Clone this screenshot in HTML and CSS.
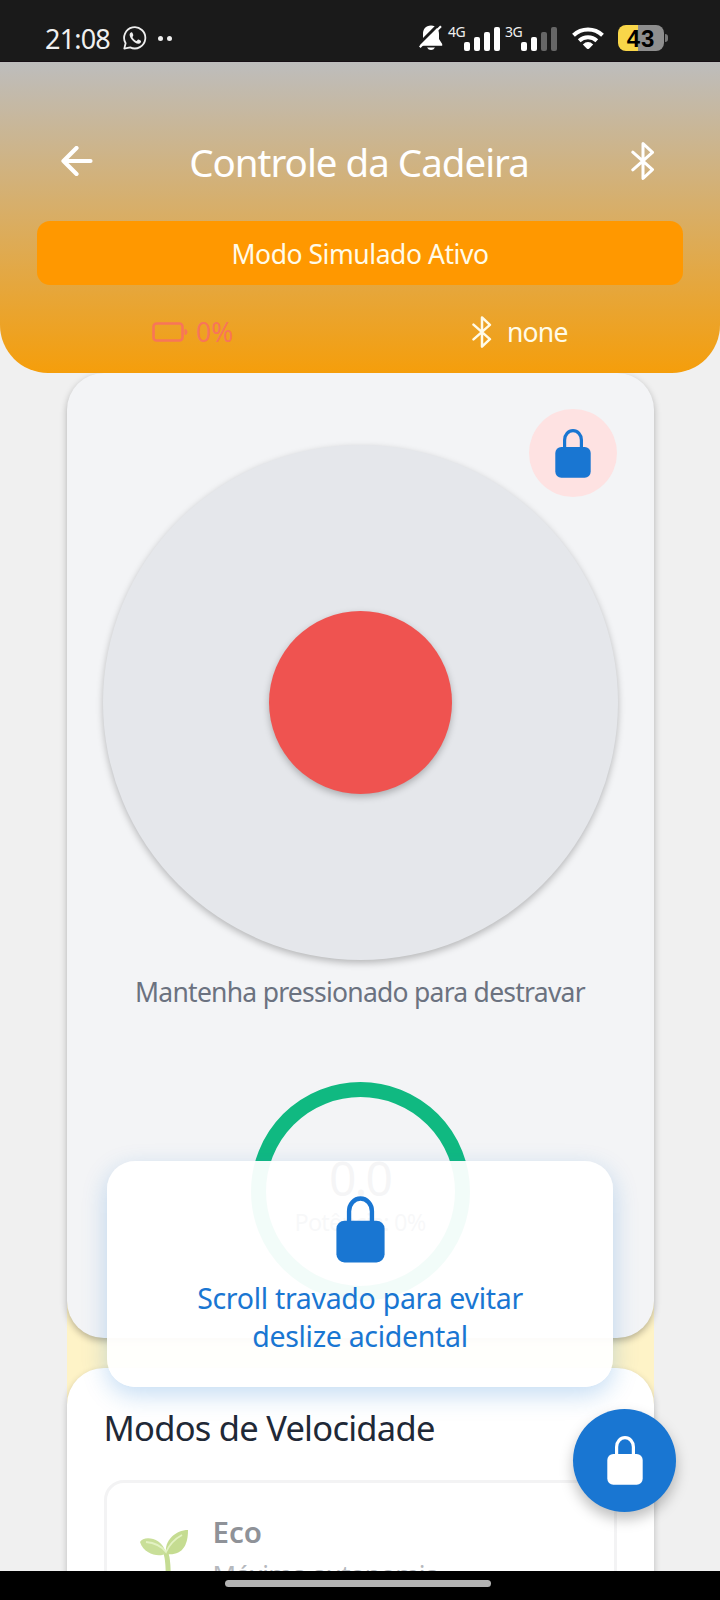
FILE: index.html
```html
<!DOCTYPE html>
<html lang="pt-BR">
<head>
<meta charset="utf-8">
<title>Controle da Cadeira</title>
<link rel="stylesheet" href="styles.css">
</head>
<body>
<svg class="defs" width="0" height="0" aria-hidden="true">
  <symbol id="lock" viewBox="0 0 36 49">
    <path d="M9.600 21V11a8.400 9.300 0 0 1 16.800 0v10" fill="none" stroke="currentColor" stroke-width="3.2"/>
    <rect x="0.3" y="18" width="35.4" height="30.7" rx="6" fill="currentColor"/>
  </symbol>
  <symbol id="bluetooth" viewBox="0 0 24 40">
    <path d="M1.8 11.2L21.5 28.6L12 37.5V2.5L21.5 11.4L1.8 28.8" fill="none" stroke="currentColor" stroke-width="3" stroke-linejoin="round" stroke-linecap="round"/>
  </symbol>
</svg>
<div class="phone">
  <div class="statusbar">
    <div class="status-left">
      <span class="clock">21:08</span>
      <svg class="whatsapp" viewBox="0 0 24 24"><path d="M1.3 22.6L2.600 17.200A10.6 10.6 0 1 1 7.200 21.400L1.300 22.600Z" fill="none" stroke="#eee" stroke-width="1.800" stroke-linejoin="round"/><path d="M8.300 6.300C6 7.300 6.200 10 8.500 13.200C11.200 16.900 15.800 19.200 17.600 16.700C18.600 15 17.900 14.600 15.600 13.600C14.400 13.100 14.300 15.300 13.200 14.900C11.700 14.300 9.900 12.300 9.500 11.200C9.300 10.300 10.700 10 10.200 8.700C9.600 7 9.400 6 8.300 6.300Z" fill="#eee"/></svg>
      <i class="dot"></i><i class="dot"></i>
    </div>
    <div class="status-right">
      <svg class="bell" viewBox="0 0 24 26"><path d="M12 0.500C6.500 0.500 4 4.500 4 9V14L0.800 19V20.800H23.200V19L20 14V9C20 4.500 17.500 0.500 12 0.500ZM8 22.500H16Q14.500 25 12 25T8 22.500Z" fill="#fff"/><path d="M-1.500 20.500L20 -1" stroke="#1a1a1a" stroke-width="3"/><path d="M0.800 22.300L22 1.200" stroke="#fff" stroke-width="2.200"/></svg>
      <div class="signal"><span class="net">4G</span><i class="b1"></i><i class="b2"></i><i class="b3"></i><i class="b4"></i></div>
      <div class="signal second"><span class="net">3G</span><i class="b1"></i><i class="b2"></i><i class="b3 off"></i><i class="b4 off"></i></div>
      <svg class="wifi" viewBox="0 0 32 24"><g fill="none" stroke="#fff" stroke-width="4"><path d="M1.500 9.200A21 21 0 0 1 30.500 9.200"/><path d="M7.200 14.700A13 13 0 0 1 24.800 14.700"/></g><path d="M10.800 18.500Q16 13.600 21.200 18.500L17 22.700Q16 23.500 15 22.700Z" fill="#fff"/></svg>
      <div class="batt">43</div><i class="batt-cap"></i>
    </div>
  </div>

  <header class="header">
    <div class="topbar">
      <svg class="back" viewBox="0 0 32 30"><path d="M15.500 2L2.500 15L15.500 28M2.500 15H29.500" fill="none" stroke="#fff" stroke-width="4.200" stroke-linecap="round" stroke-linejoin="round"/></svg>
      <h1 class="title"><span>Controle da Cadeira</span></h1>
      <svg class="bt-large"><use href="#bluetooth"/></svg>
    </div>
    <div class="banner">Modo Simulado Ativo</div>
    <div class="stats">
      <div class="stat low">
        <svg class="cell" viewBox="0 0 36 20"><rect x="1.500" y="1.500" width="29" height="17" rx="3" fill="none" stroke="currentColor" stroke-width="2.600"/><path d="M33 7.500Q35 7.500 35 10T33 12.500Z" fill="currentColor" stroke="currentColor"/></svg>
        <span>0%</span>
      </div>
      <div class="stat conn">
        <svg class="bt-small"><use href="#bluetooth"/></svg>
        <span>none</span>
      </div>
    </div>
  </header>

  <main class="content">
    <section class="control">
      <div class="lock-badge"><svg class="lock-sm"><use href="#lock"/></svg></div>
      <div class="joystick"><div class="knob"></div></div>
      <p class="hint">Mantenha pressionado para destravar</p>
      <div class="gauge">
        <span class="speed">0.0</span>
        <span class="power">Potência: 0%</span>
      </div>
    </section>
    <section class="modes">
      <h2 class="modes-title">Modos de Velocidade</h2>
      <div class="mode">
        <svg class="sprout" viewBox="0 0 48 60"><path d="M25.500 22Q29 30 28 58" fill="none" stroke="#c5dc93" stroke-width="5"/><path d="M0 12C3 6 21 6 26 23C21 28 4 25 0 12Z" fill="#c9df99"/><path d="M48 0C36 0 24 10 26 24C42 26 48 16 48 0Z" fill="#c5dc91"/><path d="M6 12Q19 13 26 22Q31 11 42 5" fill="none" stroke="#e3f2c3" stroke-width="1.800"/></svg>
        <div class="mode-text"><b class="mode-name">Eco</b><span class="mode-desc">Máxima autonomia</span></div>
      </div>
    </section>
  </main>

  <div class="notice">
    <svg class="lock-lg"><use href="#lock"/></svg>
    <p>Scroll travado para evitar<br>deslize acidental</p>
  </div>
  <button class="fab" aria-label="Travar"><svg class="lock-sm"><use href="#lock"/></svg></button>
  <div class="navbar"><i class="pill"></i></div>
</div>
</body>
</html>
```
FILE: styles.css
```css
* { box-sizing: border-box; margin: 0; padding: 0; }
body { font-family: "Noto Sans", sans-serif; width: 720px; height: 1600px; overflow: hidden; }
svg { display: block; flex: none; }
.defs { position: absolute; }
.phone { position: relative; width: 720px; height: 1600px; overflow: hidden; display: flex; flex-direction: column; background: #f0f0f0; }

.statusbar { height: 62px; flex: none; background: #1a1a1a; color: #f0f0f0; display: flex; justify-content: space-between; padding: 14px 56px 0 45px; border-bottom: 1px solid #160f16; }
.status-left, .status-right { display: flex; align-items: center; height: 48px; }
.clock { font-size: 27px; width: 78px; white-space: nowrap; letter-spacing: -.8px; }
.whatsapp { width: 24px; height: 24px; margin-right: 11px; }
.dot { width: 5px; height: 5px; border-radius: 50%; background: #eee; margin-right: 4px; }
.bell { width: 24px; height: 26px; margin-right: 5px; }
.signal { display: flex; align-items: flex-end; height: 26px; gap: 4px; }
.signal.second { margin-left: 5px; }
.signal i { width: 6px; border-radius: 2px; background: #fff; }
.signal .off { background: #666; }
.net { font-size: 14px; line-height: 13px; letter-spacing: -.5px; align-self: flex-start; margin-right: -6px; width: 18px; }
.b1 { height: 9px; } .b2 { height: 14px; } .b3 { height: 19px; } .b4 { height: 24px; }
.wifi { width: 32px; height: 24px; margin: 0 14px 0 15px; }
.batt { width: 46px; height: 26px; border-radius: 8px; background: linear-gradient(90deg, #f9d649 0 20px, #8e8e8e 20px); color: #000; font: bold 24px/27px "Liberation Sans", sans-serif; letter-spacing: 1px; text-align: center; }
.batt-cap { width: 3px; height: 8px; border-radius: 0 3px 3px 0; background: #777; margin-left: 1px; margin-right: -4px; }

.header { height: 310.500px; flex: none; padding: 60px 37px 0; border-radius: 0 0 48px 48px; background: linear-gradient(#bdbdbd, #f59e0b); color: #fff; position: relative; z-index: 1; }
.topbar { height: 80px; display: flex; align-items: center; justify-content: space-between; padding: 0 28px 0 24px; }
.back { width: 32px; height: 30px; margin-bottom: 2px; }
.title { font-size: 38.500px; font-weight: 400; line-height: 78px; letter-spacing: -1px; white-space: nowrap; margin: 0 6px 0 0; }
.bt-large { width: 24px; height: 40px; margin-bottom: 2px; }
.banner { margin-top: 19px; height: 64px; border-radius: 13px; background: #ff9800; font-size: 26.500px; line-height: 66px; letter-spacing: -.45px; text-align: center; color: #fffbe8; }
.stats { display: flex; height: 93px; }
.stat { width: 50%; display: flex; align-items: center; font-size: 26.500px; }
.low { padding-left: 115px; color: #f87559; gap: 8px; }
.cell { width: 36px; height: 20px; }
.conn { padding-left: 112px; gap: 15px; color: #fffbe8; letter-spacing: -.8px; }
.bt-small { width: 20px; height: 34px; }

.content { margin: 0 66.500px; flex: none; height: 1228px; background: linear-gradient(#f0f0f0 0 800px, #fef3c7 800px); }
.control { height: 965px; border-radius: 37px; background: #f3f4f6; box-shadow: 0 3px 7px rgba(0,0,0,.27); padding-top: 36.500px; display: flex; flex-direction: column; align-items: center; position: relative; }
.lock-badge { width: 88px; height: 88px; border-radius: 50%; background: #fee2e2; color: #1976d2; display: grid; place-items: center; align-self: flex-end; margin-right: 37px; position: relative; z-index: 1; }
.lock-sm { width: 36px; height: 49px; }
.joystick { width: 515px; height: 515px; margin-top: -52.500px; border-radius: 50%; background: #e5e7eb; box-shadow: 0 3px 7px rgba(0,0,0,.25); display: grid; place-items: center; }
.knob { width: 183px; height: 183px; border-radius: 50%; background: #ef5350; box-shadow: 0 3px 7px rgba(0,0,0,.25); }
.hint { font-size: 26.500px; line-height: 36px; letter-spacing: -.75px; margin-top: 14px; color: #6b7280; white-space: nowrap; }
.gauge { width: 219px; height: 219px; flex: none; margin-top: 72px; border: 15px solid #10b981; border-radius: 50%; display: flex; flex-direction: column; align-items: center; padding-top: 53px; }
.speed { font-size: 48px; line-height: 56px; letter-spacing: -2px; color: #374151; }
.power { font-size: 23.500px; line-height: 32px; letter-spacing: -.8px; color: #6b7280; white-space: nowrap; }
.modes { margin-top: 30px; height: 260px; border-radius: 37px 37px 0 0; background: #fff; box-shadow: 0 3px 7px rgba(0,0,0,.22); padding: 37px 37px 0; }
.modes-title { font-size: 34.500px; font-weight: 400; line-height: 46px; letter-spacing: -.75px; color: #1f2937; white-space: nowrap; }
.mode { margin-top: 29px; height: 160px; border: 3px solid #f3f3f4; border-radius: 20px; display: flex; padding: 46px 33px 0; gap: 25px; }
.sprout { width: 48px; height: 60px; margin-top: 1px; }
.mode-text { display: flex; flex-direction: column; margin-top: -16px; color: #8f9298; }
.mode-name { font-size: 29.500px; line-height: 38px; font-weight: 600; }
.mode-desc { font-size: 26px; line-height: 36px; letter-spacing: -.7px; margin-top: 5px; color: #b5b8bd; white-space: nowrap; }

.notice { position: absolute; left: 107px; top: 1161px; width: 506px; height: 226px; z-index: 2; border-radius: 28px; background: rgba(255,255,255,.95); box-shadow: 0 8px 25px rgba(25,118,210,.25); padding-top: 35px; display: flex; flex-direction: column; align-items: center; color: #1976d2; }
.lock-lg { width: 49px; height: 67px; }
.notice p { margin-top: 17px; font-size: 28.500px; line-height: 37.500px; letter-spacing: -.3px; text-align: center; white-space: nowrap; }
.fab { position: absolute; left: 573px; top: 1409px; width: 103px; height: 103px; z-index: 3; border: 0; border-radius: 50%; background: #1976d2; color: #fff; display: grid; place-items: center; box-shadow: 0 7px 14px rgba(0,0,0,.26); }
.navbar { position: absolute; left: 0; bottom: 0; width: 720px; height: 29.500px; z-index: 4; background: #000; display: flex; justify-content: center; padding: 9px 4px 0 0; }
.pill { width: 266px; height: 7px; border-radius: 4px; background: #b3b3b3; }
```
